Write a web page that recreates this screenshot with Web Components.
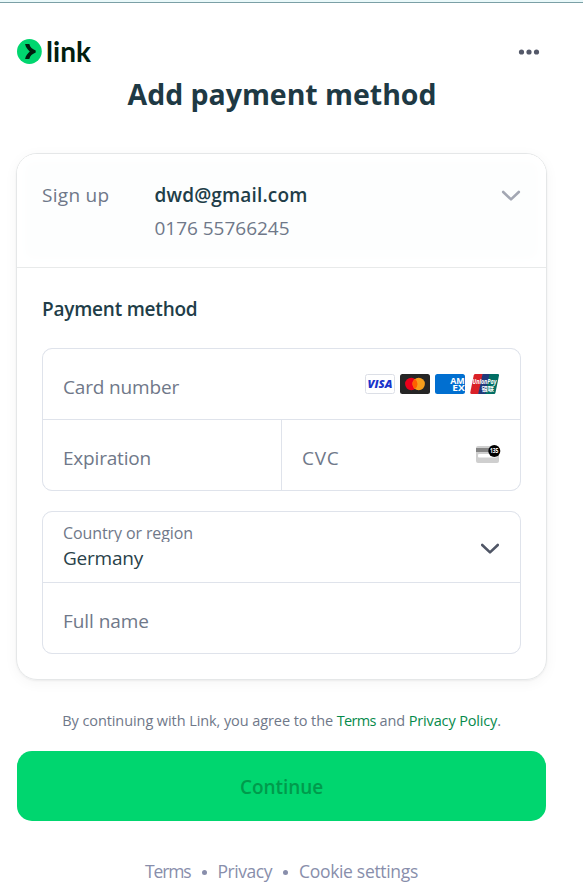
<!DOCTYPE html>
<html lang="en">
<head>
<meta charset="utf-8">
<title>Add payment method</title>
<style>
html, body { margin: 0; background: #fff; }
body { font-family: "Open Sans", "Noto Sans", sans-serif; color: #6f7889; overflow: hidden; }
</style>
</head>
<body>
<payment-page></payment-page>
<script>
const define = (name, html, setup) => {
  const template = document.createElement('template');
  template.innerHTML = html.trim();
  customElements.define(name, class extends HTMLElement {
    connectedCallback() {
      if (this.shadowRoot) return;
      this.attachShadow({ mode: 'open' }).append(template.content.cloneNode(true));
      if (setup) setup(this);
    }
  });
};

// A single line of text, tracked to the advance width given in "w".
define('fit-text', `<style>:host { display: inline-block; white-space: pre; flex: none; justify-self: start; vertical-align: top; }</style><slot></slot>`, el => {
  const target = Number(el.getAttribute('w'));
  if (!target) return;
  const spacing = (target - el.getBoundingClientRect().width) / el.textContent.length;
  el.style.letterSpacing = spacing.toFixed(3) + 'px';
});

define('link-logo', `
<style>
:host { display: flex; align-items: center; height: 26px; color: #011e0f; }
svg { display: block; margin-right: 4px; }
fit-text { font: 700 28px/26px Lato, sans-serif; }
</style>
<svg width="25" height="25" viewBox="0 0 25 25"><circle cx="12.4" cy="12.5" r="12.4" fill="#00d66f"/><path d="M8.1 5h4.200c.8 3.100 2.900 5.100 6.400 6.500v2c-3.500 1.400-5.600 3.400-6.400 6.500H8.100c.6-3 2.200-5.400 4.700-7.500C10.300 10.400 8.700 8 8.100 5z" fill="#011e0f"/></svg>
<fit-text w="45">link</fit-text>`);

define('more-button', `
<style>:host { display: block; margin-top: 1px; } svg { display: block; }</style>
<svg width="22" height="6" viewBox="0 0 22 6" fill="#545969"><circle cx="3.500" cy="3" r="2.600"/><circle cx="11" cy="3" r="2.600"/><circle cx="18.500" cy="3" r="2.600"/></svg>`);

define('chevron-icon', `
<style>:host { display: block; } svg { display: block; }</style>
<svg width="20" height="12" viewBox="0 0 20 12"><path d="M2.200 2 10 9.400 17.800 2" fill="none" stroke="currentColor" stroke-width="2.600" stroke-linecap="round" stroke-linejoin="round"/></svg>`);

define('card-brands', `
<style>:host { display: flex; gap: 5px; } svg { display: block; } text { font-family: "Open Sans", sans-serif; }</style>
<svg width="30" height="20" viewBox="0 0 30 20"><rect x=".5" y=".5" width="29" height="19" rx="2" fill="#fff" stroke="#dcdfe6"/><text x="2.500" y="14.200" font-size="11" font-weight="800" font-style="italic" fill="#1a34cb" textLength="25" lengthAdjust="spacingAndGlyphs">VISA</text></svg>
<svg width="30" height="20" viewBox="0 0 30 20"><rect width="30" height="20" rx="2.500" fill="#252525"/><circle cx="11.300" cy="10" r="6.200" fill="#eb001b"/><circle cx="18.700" cy="10" r="6.200" fill="#f79e1b"/><path d="M15 5.020a6.200 6.200 0 0 1 0 9.960 6.200 6.200 0 0 1 0-9.960z" fill="#ff5f00"/></svg>
<svg width="30" height="20" viewBox="0 0 30 20"><rect width="30" height="20" rx="2.500" fill="#016fd0"/><g fill="#fff" font-size="8.500" font-weight="700"><text x="15.200" y="9.800" textLength="14.500" lengthAdjust="spacingAndGlyphs">AM</text><text x="17.300" y="17" textLength="12.500" lengthAdjust="spacingAndGlyphs">EX</text></g></svg>
<svg width="30" height="20" viewBox="0 0 30 20"><path d="M5.300 0H13L8.700 20H1.500C.500 20 .100 19.300.300 18.300L3.700 1.500C3.900.600 4.500 0 5.300 0z" fill="#da2128"/><path d="M12.500 0h8l-4.200 20H8.200z" fill="#22397a"/><path d="M19.500 0h8.200c1 0 1.500.600 1.300 1.500L25.500 18.400c-.2 1-.9 1.600-1.800 1.600h-8.400z" fill="#016e64"/><text x="2.500" y="9.700" font-size="6.500" font-weight="700" font-style="italic" fill="#fff" textLength="24" lengthAdjust="spacingAndGlyphs">UnionPay</text><text x="11.500" y="16.500" font-size="6" font-weight="700" fill="#fff" textLength="12.500" lengthAdjust="spacingAndGlyphs" style="font-family:'Noto Sans CJK SC',sans-serif">银联</text></svg>`);

define('cvc-icon', `
<style>:host { display: block; margin: -3px -1px 0 0; } svg { display: block; }</style>
<svg width="25" height="20" viewBox="0 0 25 20"><rect y="2" width="23" height="17" rx="2" fill="#cfcfcf"/><rect y="4" width="23" height="4" fill="#858585"/><rect x="2" y="10" width="19" height="3.500" rx="1" fill="#fff"/><circle cx="18.300" cy="7" r="6" fill="#000"/><text x="13.900" y="9.400" font-size="6.500" font-weight="700" fill="#fff" textLength="8.600" lengthAdjust="spacingAndGlyphs" style="font-family:'Open Sans',sans-serif">135</text></svg>`);

define('form-field', `
<style>
:host { display: flex; flex: 1; box-sizing: border-box; height: 70px; padding: 5px 20px 0 20px; align-items: center; justify-content: space-between; font-size: 19px; line-height: 26px; }
.icon { margin-top: -5px; }
</style>
<slot></slot><div class="icon"><slot name="icon"></slot></div>`);

define('field-group', `
<style>
:host { display: grid; gap: 1px; background: #dfe3eb; border: 1px solid #dfe3eb; border-radius: 10px; overflow: hidden; }
::slotted(*) { background: #fff; }
</style><slot></slot>`);

define('account-summary', `
<style>
:host { display: grid; grid-template-columns: 112px 1fr auto; height: 114px; box-sizing: border-box; padding: 25px 25px 0; border-bottom: 1px solid #e8eaea; font-size: 19px; line-height: 33px; background: #fdfefe; box-shadow: inset 0 0 12px 8px #fff; }
.details { display: grid; grid-auto-rows: 33px; align-content: start; }
strong { font-weight: 550; color: #213d48; }
.details fit-text { margin-left: .5px; }
chevron-icon { color: #a3a7b3; margin-top: 11px; }
</style>
<fit-text w="67.500">Sign up</fit-text>
<div class="details"><strong><fit-text w="153">dwd@gmail.com</fit-text></strong><span><fit-text w="135">0176 55766245</fit-text></span></div>
<chevron-icon></chevron-icon>`);

define('payment-card', `
<style>
:host { display: block; box-sizing: border-box; height: 527px; border: 1px solid #e5e7e8; border-radius: 21px; box-shadow: 0 3px 14px rgba(0,0,0,.045), 0 1px 2px rgba(0,0,0,.05); overflow: hidden; }
.body { padding: 25px 25px 25px; }
h2 { margin: 0 0 24px; font: 550 19px/32px "Open Sans", sans-serif; height: 31px; color: #213d48; }
field-group + field-group { margin-top: 20px; }
.split { display: grid; grid-template-columns: 238px 1fr; gap: 1px; background: #dfe3eb; }
.split > * { background: #fff; }
.country { display: grid; align-content: start; margin-top: -4px; }
.label { font-size: 16px; line-height: 20px; height: 19px; margin-bottom: 1px; overflow: hidden; }
.value { color: #294149; line-height: 30px; }
chevron-icon { color: #505666; margin-top: 4px; }
</style>
<account-summary></account-summary>
<div class="body">
<h2><fit-text w="155.500">Payment method</fit-text></h2>
<field-group>
<form-field><fit-text w="116">Card number</fit-text><card-brands slot="icon"></card-brands></form-field>
<div class="split"><form-field><fit-text w="88">Expiration</fit-text></form-field><form-field><fit-text w="37.500">CVC</fit-text><cvc-icon slot="icon"></cvc-icon></form-field></div>
</field-group>
<field-group>
<form-field><div class="country"><div class="label"><fit-text w="130">Country or region</fit-text></div><div class="value"><fit-text w="80">Germany</fit-text></div></div><chevron-icon slot="icon"></chevron-icon></form-field>
<form-field><fit-text w="86">Full name</fit-text></form-field>
</field-group>
</div>`);

define('continue-button', `
<style>
:host { display: block; }
button { display: flex; width: 100%; height: 70px; padding: 1px 0 0; align-items: center; justify-content: center; border: 0; border-radius: 15px; background: #00d66f; color: #009a4c; font: 550 19px/28px "Open Sans", sans-serif; }
</style><button><slot></slot></button>`);

define('page-footer', `
<style>
:host { display: flex; justify-content: center; align-items: center; font-size: 17.500px; line-height: 26px; color: #888eab; }
i { width: 5px; height: 5px; border-radius: 50%; background: #888eab; margin: 2px 11px 0; }
</style>
<fit-text w="45.500">Terms</fit-text><i></i><fit-text w="54.500">Privacy</fit-text><i></i><fit-text w="119">Cookie settings</fit-text>`);

define('payment-page', `
<style>
:host { display: block; box-sizing: border-box; width: 583px; height: 896px; border-top: 2px solid #eaf9fa; }
.edge { height: 1px; background: #7ba0a6; }
header { display: flex; justify-content: space-between; align-items: center; padding: 35px 43px 0 17px; }
h1 { display: flex; justify-content: center; margin: 9px 19px 0 0; height: 42px; font: 700 28.500px/42px "Open Sans", sans-serif; color: #1e3944; }
payment-card { margin: 38px 36px 0 16px; }
.note { display: flex; justify-content: center; margin: 31px 20px 0 0; height: 20px; font-size: 14.500px; line-height: 20px; }
.link { color: #068a4b; }
continue-button { margin: 20px 37px 0 17px; }
page-footer { margin: 37px 20px 0 0; }
</style>
<div class="edge"></div>
<header><link-logo></link-logo><more-button></more-button></header>
<h1><fit-text w="309">Add payment method</fit-text></h1>
<payment-card></payment-card>
<div class="note"><fit-text w="274.500">By continuing with Link, you agree to the </fit-text><fit-text class="link" w="39">Terms</fit-text><fit-text w="33"> and </fit-text><fit-text class="link" w="88.500">Privacy Policy</fit-text><fit-text w="3.500">.</fit-text></div>
<continue-button><fit-text w="83">Continue</fit-text></continue-button>
<page-footer></page-footer>`);
</script>
</body>
</html>
